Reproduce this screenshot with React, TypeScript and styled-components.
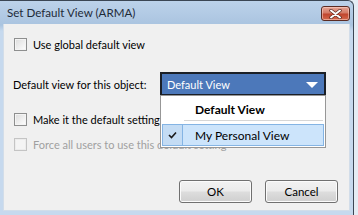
import React from 'react';
import styled, {createGlobalStyle} from 'styled-components';

const GlobalStyle = createGlobalStyle`
  html, body {
    margin: 0;
    padding: 0;
    background: #e4ecf4;
  }
  body {
    font-family: Lato, 'Open Sans', sans-serif;
    font-size: 11px;
    color: #000;
  }
`

const Window = styled.div`
  position: relative;
  width: 354px;
  height: 215px;
  box-sizing: border-box;
  border-top: 1px solid #3b4654;
  border-right: 1px solid #3b4654;
  border-radius: 0 6px 0 0;
  background: linear-gradient(#bcd2ea, #aac4e0 24px, #c6d9ee 30px, #c6d9ee);
  display: flex;
  flex-direction: column;
`

const TitleBar = styled.div`
  height: 23px;
  display: flex;
  align-items: center;
  justify-content: space-between;
  padding: 0 3px 0 7px;
`

const Title = styled.span`
  font-size: 11.6px;
  color: #1e2a38;
`

const CloseButton = styled.div`
  width: 29px;
  height: 15px;
  margin-top: 2px;
  box-sizing: border-box;
  border: 1px solid #5b2b22;
  border-radius: 3px;
  background: linear-gradient(#e6a494, #d47a66 45%, #c0452e 55%, #d4684c);
  box-shadow: inset 0 0 0 1px rgba(255, 220, 210, 0.5);
  display: flex;
  align-items: center;
  justify-content: center;
`

const Client = styled.div`
  flex: 1;
  margin: 0 3px 4px 3px;
  background: #f0f0f0;
  border: 1px solid #d2dde9;
  border-top: none;
  display: flex;
  flex-direction: column;
  padding: 14px 11px 7px 10px;
`

const CheckRow = styled.label<{disabled?: boolean}>`
  display: flex;
  align-items: center;
  gap: 6px;
  height: 13px;
  white-space: nowrap;
  font-size: 11px;
  color: ${p => (p.disabled ? '#a0a0a0' : '#000')};
`

const Box = styled.span<{disabled?: boolean}>`
  flex: none;
  width: 13px;
  height: 13px;
  box-sizing: border-box;
  border: 1px solid ${p => (p.disabled ? '#c4c4c4' : '#8e8f8f')};
  background: ${p => p.disabled
    ? '#f4f4f4'
    : 'linear-gradient(135deg, #dcdcdc, #f4f4f4 70%, #fff)'};
  box-shadow: inset 0 0 0 1px ${p => (p.disabled ? '#ececec' : '#f4f4f4')};
`

const FieldRow = styled.div`
  position: relative;
  display: flex;
  align-items: center;
  margin: 21px 0 17px -1px;
  height: 24px;
`

const FieldLabel = styled.span`
  width: 147px;
  white-space: nowrap;
  font-size: 11px;
`

const Select = styled.div`
  position: relative;
  width: 166px;
  height: 24px;
  box-sizing: border-box;
  border: 2px solid #1b1f26;
  background: #4c78ba;
  color: #fff;
  font-size: 11px;
  display: flex;
  align-items: center;
  justify-content: space-between;
  padding: 0 6px 0 5px;
`

const Arrow = styled.span`
  width: 0;
  height: 0;
  border-left: 6px solid transparent;
  border-right: 6px solid transparent;
  border-top: 6px solid #fff;
  margin-top: 2px;
`

const Menu = styled.div`
  position: absolute;
  left: -2px;
  top: 21px;
  width: 166px;
  box-sizing: border-box;
  background: #fff;
  color: #000;
  border: 1px solid #979797;
  padding: 1px;
  z-index: 2;
`

const MenuItem = styled.div<{selected?: boolean; bold?: boolean}>`
  position: relative;
  height: 22px;
  display: flex;
  align-items: center;
  box-sizing: border-box;
  font-size: 12px;
  font-weight: ${p => (p.bold ? 700 : 400)};
  background: ${p => (p.selected ? '#cce4fb' : 'transparent')};
  border: 1px solid ${p => (p.selected ? '#84b4e4' : 'transparent')};
  margin-top: ${p => (p.selected ? '3px' : '1px')};
`

const IconCell = styled.span<{selected?: boolean}>`
  width: 20px;
  height: 100%;
  box-sizing: border-box;
  border-right: 1px solid ${p => (p.selected ? '#84b4e4' : 'transparent')};
  background: ${p => (p.selected ? '#c4dcf4' : 'transparent')};
  display: flex;
  align-items: center;
  justify-content: center;
  margin-right: 12px;
`

const Separator = styled.div`
  height: 1px;
  margin: 0 1px 0 22px;
  background: #d6d6d6;
`

const Spacer = styled.div<{h: number}>`
  height: ${p => p.h}px;
`

const Buttons = styled.div`
  margin-top: auto;
  display: flex;
  justify-content: flex-end;
  gap: 13px;
`

const Button = styled.button`
  width: 73px;
  height: 23px;
  font-family: inherit;
  font-size: 11.5px;
  color: #000;
  border: 1px solid #707070;
  border-radius: 3px;
  background: linear-gradient(#f2f2f2, #ebebeb 48%, #dddddd 52%, #cfcfcf);
  box-shadow: inset 0 0 0 1px #fbfbfb;
  padding: 0;
`

const Check = () => (
  <svg width='9' height='8' viewBox='0 0 9 8'>
    <path d='M1 4 L3.5 6.5 L8 1.5' fill='none' stroke='#1a1a1a' strokeWidth='1.6' />
  </svg>
);

const CloseGlyph = () => (
  <svg width='13' height='10' viewBox='0 0 13 10'>
    <path d='M2 1.5 L11 8.5 M11 1.5 L2 8.5' stroke='#5a2a20' strokeWidth='3.4' strokeLinecap='round' />
    <path d='M2 1.5 L11 8.5 M11 1.5 L2 8.5' stroke='#fff' strokeWidth='2' strokeLinecap='round' />
  </svg>
);

export default function App() {
  return (
    <>
      <GlobalStyle />
      <Window>
        <TitleBar>
          <Title>Set Default View (ARMA)</Title>
          <CloseButton><CloseGlyph /></CloseButton>
        </TitleBar>
        <Client>
          <CheckRow><Box />Use global default view</CheckRow>
          <FieldRow>
            <FieldLabel>Default view for this object:</FieldLabel>
            <Select>
              Default View
              <Arrow />
              <Menu>
                <MenuItem bold>
                  <IconCell />
                  Default View
                </MenuItem>
                <Separator />
                <MenuItem selected>
                  <IconCell selected><Check /></IconCell>
                  My Personal View
                </MenuItem>
              </Menu>
            </Select>
          </FieldRow>
          <CheckRow><Box />Make it the default setting</CheckRow>
          <Spacer h={12} />
          <CheckRow disabled><Box disabled />Force all users to use this default setting</CheckRow>
          <Buttons>
            <Button>OK</Button>
            <Button>Cancel</Button>
          </Buttons>
        </Client>
      </Window>
    </>
  );
}
